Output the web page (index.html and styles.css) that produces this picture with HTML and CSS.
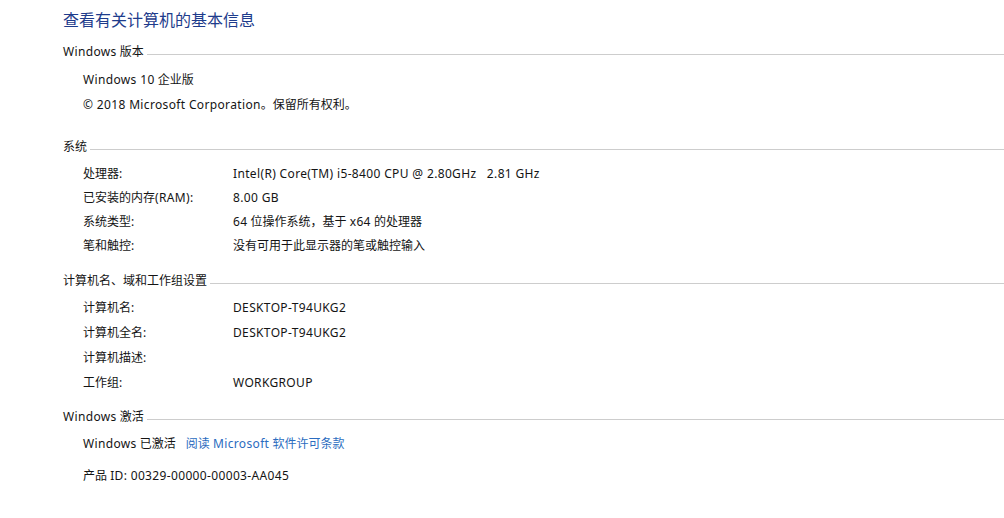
FILE: index.html
```html
<!DOCTYPE html>
<html lang="zh-CN">
<head>
<meta charset="utf-8">
<title>系统</title>
<link rel="stylesheet" href="styles.css">
</head>
<body>
<main class="page">
  <h1 class="title">查看有关计算机的基本信息</h1>

  <section class="section">
    <div class="heading"><span class="heading-text"><span class="lat">Windows</span> 版本</span><span class="rule"></span></div>
    <div class="rows rows-25 mt7">
      <div class="row"><span class="lat">Windows 10</span>&nbsp;企业版</div>
      <div class="row"><span class="lat">© 2018 Microsoft Corporation</span>。保留所有权利。</div>
    </div>
  </section>

  <section class="section mt22">
    <div class="heading"><span class="heading-text">系统</span><span class="rule"></span></div>
    <div class="rows rows-24 mt7">
      <div class="row"><span class="label">处理器:</span><span class="value lat">Intel(R) Core(TM) i5-8400 CPU @ 2.80GHz&nbsp;&nbsp;&nbsp;2.81 GHz</span></div>
      <div class="row"><span class="label">已安装的内存<span class="lat">(RAM)</span>:</span><span class="value lat">8.00 GB</span></div>
      <div class="row"><span class="label">系统类型:</span><span class="value"><span class="lat">64</span> 位操作系统，基于 <span class="lat">x64</span> 的处理器</span></div>
      <div class="row"><span class="label">笔和触控:</span><span class="value">没有可用于此显示器的笔或触控输入</span></div>
    </div>
  </section>

  <section class="section mt15">
    <div class="heading"><span class="heading-text">计算机名、域和工作组设置</span><span class="rule"></span></div>
    <div class="rows rows-25 mt6">
      <div class="row"><span class="label">计算机名:</span><span class="value lat">DESKTOP-T94UKG2</span></div>
      <div class="row"><span class="label">计算机全名:</span><span class="value lat">DESKTOP-T94UKG2</span></div>
      <div class="row"><span class="label">计算机描述:</span><span class="value"></span></div>
      <div class="row"><span class="label">工作组:</span><span class="value lat">WORKGROUP</span></div>
    </div>
  </section>

  <section class="section mt14">
    <div class="heading"><span class="heading-text"><span class="lat">Windows</span> 激活</span><span class="rule"></span></div>
    <div class="rows rows-25 mt6">
      <div class="row"><span class="lat">Windows</span>&nbsp;已激活<a class="link" href="#">阅读 <span class="lat">Microsoft</span> 软件许可条款</a></div>
    </div>
    <div class="rows rows-25 mt7">
      <div class="row">产品&nbsp;<span class="lat">ID: 00329-00000-00003-AA045</span></div>
    </div>
  </section>
</main>
</body>
</html>
```
FILE: styles.css
```css
* { box-sizing: border-box; }
html, body { margin: 0; padding: 0; background: #ffffff; }
body {
  font-family: "Noto Sans", "Noto Sans CJK SC", sans-serif;
  font-size: 12px;
  color: #141414;
}
.page {
  padding: 9px 0 0 63px;
}
.title {
  margin: 0 0 13px 0;
  font-size: 16px;
  line-height: 22px;
  font-weight: normal;
  color: #1e3c8c;
}
.lat { letter-spacing: 0.35px; }
.heading {
  display: flex;
  align-items: flex-start;
  height: 16px;
  line-height: 16px;
}
.heading-text { white-space: nowrap; }
.rule {
  flex: 1;
  height: 1px;
  margin: 10px 0 0 3px;
  background: #cdcdcd;
}
.rows { padding-left: 20px; }
.rows-25 .row { height: 25px; line-height: 25px; }
.rows-24 .row { height: 24px; line-height: 24px; }
.row { display: flex; white-space: pre; }
.label { width: 150px; flex: none; }
.value { flex: none; }
.link {
  margin-left: 10px;
  color: #2b6cc0;
  text-decoration: none;
}
.mt6 { margin-top: 6px; }
.mt7 { margin-top: 7px; }
.mt14 { margin-top: 14px; }
.mt15 { margin-top: 15px; }
.mt22 { margin-top: 22px; }
```
